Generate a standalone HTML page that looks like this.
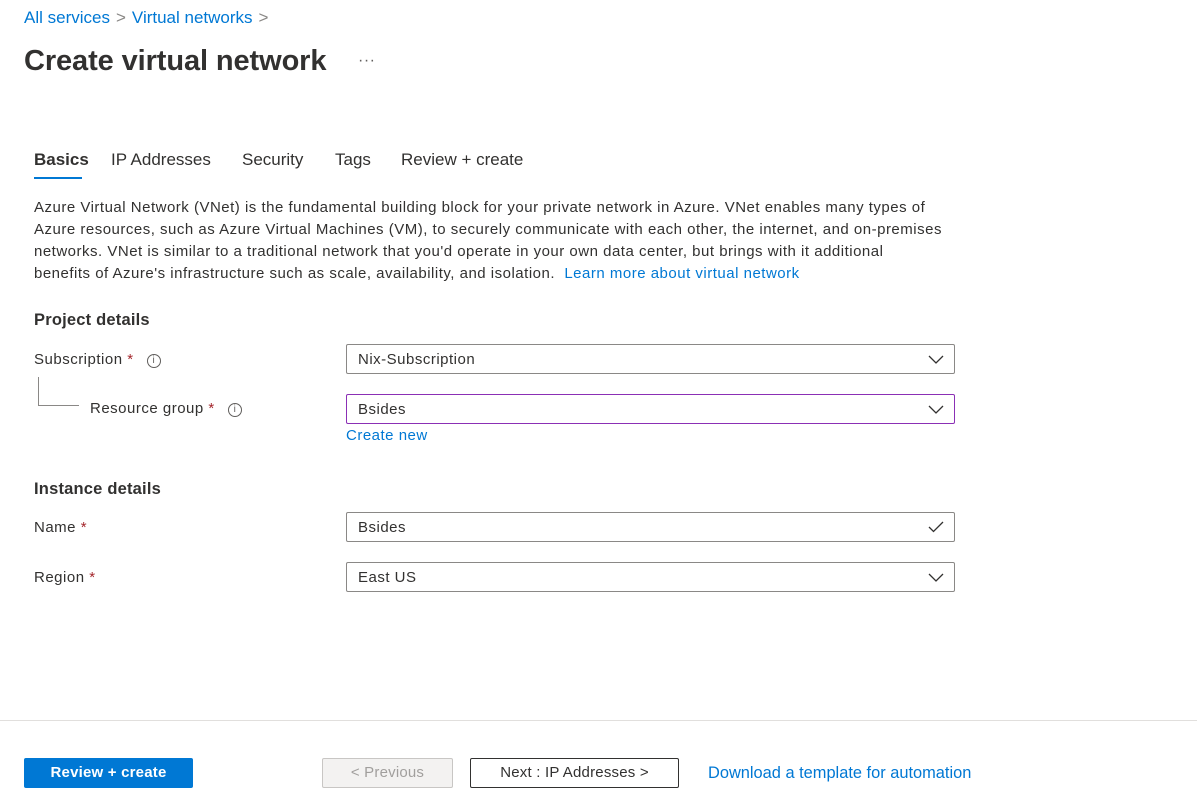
<!DOCTYPE html>
<html><head><style>
*{margin:0;padding:0;box-sizing:border-box}
body{width:1197px;height:810px;background:#fff;font-family:"Liberation Sans",sans-serif;color:#323130;font-size:15px;letter-spacing:0.5px;position:relative;overflow:hidden}
.a{position:absolute;white-space:nowrap}
.blue{color:#0078d4}
.bc{top:8px;left:24px;font-size:17px;letter-spacing:0}
.bc .sep{color:#8a8886;margin:0 6px}
h1{position:absolute;left:24px;top:45px;font-size:29px;font-weight:bold;color:#323130;letter-spacing:-0.1px}
.tab{top:150px;font-size:17px;letter-spacing:0}
.desc{left:34px;top:197px;line-height:22px;font-size:15px;letter-spacing:0.5px}
.h2{font-size:16.5px;font-weight:bold;letter-spacing:0.2px}
.req{color:#a4262c}
.info{display:inline-block;width:14px;height:14px;border:1px solid #605e5c;border-radius:50%;font-size:10px;text-align:center;line-height:12px;color:#605e5c;vertical-align:1px;margin-left:13px;letter-spacing:0}
.sel{position:absolute;left:346px;width:609px;height:30px;border:1px solid #8a8886;border-radius:2px;padding-left:11px;line-height:30px}
.sel svg{position:absolute;right:10px;top:8px}
.btn{position:absolute;top:758px;height:30px;text-align:center;line-height:30px;font-size:15px;border-radius:2px;letter-spacing:0.2px}
</style></head><body>
<div class="a bc"><span class="blue">All services</span><span class="sep">&gt;</span><span class="blue">Virtual networks</span><span class="sep">&gt;</span></div>
<h1>Create virtual network</h1>
<div class="a" style="left:358px;top:52px;font-size:16px;color:#605e5c">···</div>
<div class="a tab" style="left:34px;font-weight:bold">Basics</div>
<div style="position:absolute;left:34px;top:177px;width:48px;height:2px;background:#0078d4"></div>
<div class="a tab" style="left:111px">IP Addresses</div>
<div class="a tab" style="left:242px">Security</div>
<div class="a tab" style="left:335px">Tags</div>
<div class="a tab" style="left:401px">Review + create</div>
<div class="a desc">Azure Virtual Network (VNet) is the fundamental building block for your private network in Azure. VNet enables many types of<br>Azure resources, such as Azure Virtual Machines (VM), to securely communicate with each other, the internet, and on-premises<br>networks. VNet is similar to a traditional network that you'd operate in your own data center, but brings with it additional<br>benefits of Azure's infrastructure such as scale, availability, and isolation.&nbsp; <span class="blue">Learn more about virtual network</span></div>
<div class="a h2" style="left:34px;top:311px">Project details</div>
<div class="a" style="left:34px;top:351px">Subscription <span class="req">*</span><span class="info">i</span></div>
<div style="position:absolute;left:38px;top:377px;width:41px;height:29px;border-left:1px solid #8a8886;border-bottom:1px solid #8a8886"></div>
<div class="a" style="left:90px;top:400px">Resource group <span class="req">*</span><span class="info">i</span></div>
<div class="sel" style="top:344px">Nix-Subscription<svg width="16" height="12" viewBox="0 0 16 12"><path d="M1 3l7 7 7-7" fill="none" stroke="#323130" stroke-width="1.3"/></svg></div>
<div class="sel" style="top:394px;border-color:#8b2fb5">Bsides<svg width="16" height="12" viewBox="0 0 16 12"><path d="M1 3l7 7 7-7" fill="none" stroke="#323130" stroke-width="1.3"/></svg></div>
<div class="a blue" style="left:346px;top:427px">Create new</div>
<div class="a h2" style="left:34px;top:480px">Instance details</div>
<div class="a" style="left:34px;top:519px">Name <span class="req">*</span></div>
<div class="sel" style="top:512px">Bsides<svg width="16" height="12" viewBox="0 0 16 12"><path d="M1 6l4.5 4.5L15 1" fill="none" stroke="#323130" stroke-width="1.3"/></svg></div>
<div class="a" style="left:34px;top:569px">Region <span class="req">*</span></div>
<div class="sel" style="top:562px">East US<svg width="16" height="12" viewBox="0 0 16 12"><path d="M1 3l7 7 7-7" fill="none" stroke="#323130" stroke-width="1.3"/></svg></div>
<div style="position:absolute;left:0;top:720px;width:1197px;height:1px;background:#e1dfdd"></div>
<div class="btn" style="left:24px;width:169px;background:#0078d4;color:#fff;font-weight:bold">Review + create</div>
<div class="btn" style="left:322px;width:131px;background:#f3f2f1;border:1px solid #c8c6c4;color:#a19f9d;line-height:28px">&lt; Previous</div>
<div class="btn" style="left:470px;width:209px;border:1px solid #323130;color:#323130;line-height:28px">Next : IP Addresses &gt;</div>
<div class="a blue" style="left:708px;top:764px;font-size:16.4px;letter-spacing:0">Download a template for automation</div>
</body></html>
